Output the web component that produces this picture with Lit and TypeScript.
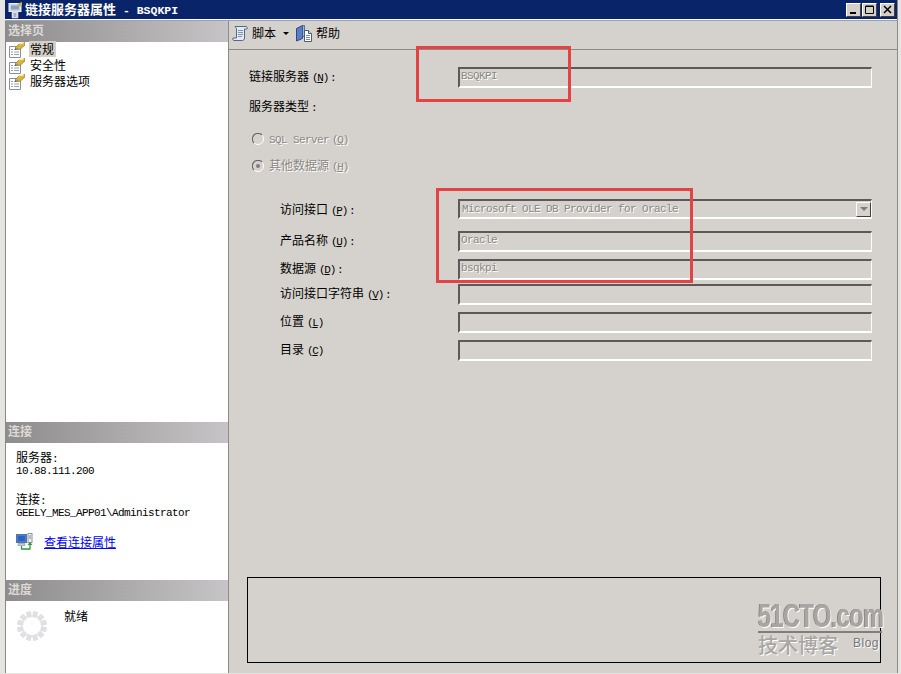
import { LitElement, html, css, svg } from "lit";
import { customElement } from "lit/decorators.js";

const pageIcon = html`<svg class="ico" viewBox="0 0 16 16" width="16" height="16">
  <path d="M.5 4.500h11v11H.5z" fill="#fff" stroke="#8a8f9a"/>
  <path d="M2 7.500h2M5 7.500h5M2 10h2M5 10h5M2 12.500h2M5 12.500h5" stroke="#8f9fb5"/>
  <path d="M6 6l4-4 6-1.500V3l-5 4.500z" fill="#d8b43c" stroke="#8a7420" stroke-width=".6"/>
  <path d="M10 2l5-1" stroke="#fff3b0"/>
  <path d="M6 6l2 1-2 1z" fill="#50606c"/>
</svg>`;

const scrollIcon = html`<svg class="ico" viewBox="0 0 16 17" width="16" height="17">
  <path d="M3 1.500H14a1.500 1.500 0 0 1 1 2.500H12.500V13c0 1.500-1 2.500-2 2.500H2c-1 0-1.500-1-1-2.500H4.500V4C4.500 3 3.500 2.500 3 1.500z" fill="#e4eaf2" stroke="#56688a"/>
  <path d="M6 5.500h5M6 7.500h5M6 9.500h5M6 11.500h4" stroke="#7f93ae"/>
</svg>`;

const helpIcon = html`<svg class="ico" viewBox="0 0 16 17" width="16" height="17">
  <path d="M.5 3.500l6-3v13l-6 2.500z" fill="#5a7fc0" stroke="#2e4a80"/>
  <path d="M6.500.500h2v11h-2z" fill="#9db8e0" stroke="#2e4a80" stroke-width=".7"/>
  <path d="M8.500 5.500h4l3 3v8h-7z" fill="#fff" stroke="#4a5a78"/>
  <path d="M12.500 5.500v3h3" fill="#d8e0ee" stroke="#4a5a78"/>
  <path d="M10 10.500h4M10 12.500h4M10 14.500h4" stroke="#7a8aa8"/>
</svg>`;

const connIcon = html`<svg class="ico" viewBox="0 0 17 17" width="17" height="17">
  <rect x=".5" y="1.500" width="10" height="8" fill="#3f7fe0" stroke="#5f6f8c"/>
  <rect x="2" y="3" width="7" height="5" fill="#2a62c8"/>
  <path d="M2 10.500h7v2H2z" fill="#c0c8d4" stroke="#8090a4" stroke-width=".6"/>
  <rect x="12" y=".5" width="4" height="9" fill="#eef0f4" stroke="#8a94a4"/>
  <path d="M13 3h2M13 5h2" stroke="#7a8494"/>
  <path d="M5.500 13v3h8.500v-5" fill="none" stroke="#2f9a3a" stroke-width="1.300"/>
  <path d="M11.500 12l2.500-3 2.500 3z" fill="#2f9a3a"/>
</svg>`;

const titleIcon = html`<svg class="ico" viewBox="0 0 16 18" width="16" height="18">
  <rect x="1" y="2.500" width="12" height="8" fill="#c8d2e0" stroke="#eef1f6"/>
  <rect x="3" y="4.500" width="8" height="4" fill="#8aa0bc"/>
  <path d="M4 11h6v6H4z" fill="#eef1f6" stroke="#b8c2d0" stroke-width=".7"/>
  <path d="M5.500 13h3M5.500 15h3" stroke="#5c6f8c"/>
  <path d="M9 3l5-2v3l-3 2z" fill="#c8b060"/>
</svg>`;

const spinnerBlocks = Array.from({ length: 12 }, (_, i) => {
  const angle = i * 30 + 15;
  return svg`<rect x="12.500" y="0" width="5" height="6" fill="#e0e0e4" transform="rotate(${angle} 15 15)"/>`;
});

const spinner = html`<svg class="spinner" viewBox="0 0 30 30" width="30" height="30">${spinnerBlocks}</svg>`;

const M = (ch: string) => html`<span class="mn">(<u>${ch}</u>)</span>`;

const SUB_ROWS = [
  { label: "访问接口", key: "P", colon: ":", value: "Microsoft OLE DB Provider for Oracle", h: 20, gap: 0, combo: true },
  { label: "产品名称", key: "U", colon: ":", value: "Oracle", h: 21, gap: 12, combo: false },
  { label: "数据源", key: "D", colon: ":", value: "bsqkpi", h: 21, gap: 7, combo: false },
  { label: "访问接口字符串", key: "V", colon: ":", value: "", h: 21, gap: 4, combo: false },
  { label: "位置", key: "L", colon: "", value: "", h: 21, gap: 7, combo: false },
  { label: "目录", key: "C", colon: "", value: "", h: 21, gap: 7, combo: false },
];

@customElement("app-root")
export class AppRoot extends LitElement {
  static styles = css`
    :host {
      display: block;
      width: 901px;
      height: 674px;
      position: relative;
      overflow: hidden;
      background: #e6e4e0;
      font-family: "Noto Sans CJK SC", "Liberation Sans", sans-serif;
      font-size: 12px;
      color: #000;
    }
    .ico { display: block; flex: none; }
    .window {
      display: flex;
      flex-direction: column;
      width: 893px;
      height: 673px;
      margin-left: 5px;
      border-right: 1px solid #8c8a86;
      box-sizing: border-box;
    }
    .titlebar {
      flex: none;
      height: 19px;
      background: #0a246a;
      display: flex;
      align-items: center;
      color: #fff;
      font-weight: 700;
      padding-left: 3px;
      gap: 1px;
      box-sizing: border-box;
    }
    .title-text { font-size: 13px; line-height: 19px; white-space: pre; flex: 1; }
    .title-latin { font-family: "Liberation Mono", monospace; font-size: 11.500px; }
    .winbtns { display: flex; margin-right: 2px; }
    .winbtn {
      width: 15px;
      height: 14px;
      box-sizing: border-box;
      background: #d4d0c8;
      border: 1px solid;
      border-color: #fff #404040 #404040 #fff;
      display: flex;
      align-items: center;
      justify-content: center;
      margin-left: 1px;
    }
    .winbtn.close { margin-left: 3px; }
    .winbtn svg { display: block; }
    .topline { flex: none; height: 2px; background: linear-gradient(#fff 50%, #9aa0b8 50%); }
    .body { flex: 1; display: flex; min-height: 0; }
    .left {
      flex: none;
      width: 224px;
      box-sizing: border-box;
      border-left: 1px solid #8c8a86;
      border-right: 1px solid #8c8a86;
      background: #fff;
      display: flex;
      flex-direction: column;
    }
    .hdr {
      flex: none;
      height: 21px;
      box-sizing: border-box;
      padding-left: 2px;
      line-height: 17px;
      font-weight: 700;
      color: #dcdad6;
      background: linear-gradient(90deg, #8e8c8c, #c6c4c6);
    }
    .list { height: 380px; flex: none; }
    .item { display: flex; align-items: center; height: 16px; padding-left: 3px; gap: 4px; white-space: nowrap; line-height: 14px; }
    .item span { padding: 0 1px; margin-top: -2px; }
    .item.sel span { background: #d4d0c8; padding: 1px 2px 1px 1px; }
    .conn { height: 137px; flex: none; padding: 7px 0 0 10px; box-sizing: border-box; }
    .conn .ln { height: 13px; line-height: 13px; white-space: pre; }
    .conn .ln.mono { line-height: 17px; }
    .mono { font-family: "Liberation Mono", monospace; font-size: 11px; letter-spacing: -.6px; white-space: pre; }
    .conn .gapped { margin-top: 16px; }
    .linkrow { display: flex; align-items: center; gap: 11px; margin-top: 15px; height: 17px; }
    .link { color: #0000ff; text-decoration: underline; line-height: 14px; }
    .prog { flex: 1; display: flex; padding: 10px 0 0 11px; gap: 17px; }
    .spinner { display: block; }
    .prog span { line-height: 10px; }
    .right {
      flex: 1;
      background: #d5d2cd;
      display: flex;
      flex-direction: column;
      min-width: 0;
    }
    .toolbar {
      flex: none;
      height: 24px;
      border-bottom: 1px solid #8c8a86;
      display: flex;
      align-items: center;
      padding: 0 0 4px 3px;
      white-space: nowrap;
      line-height: 16px;
    }
    .toolbar .lb { margin-left: 4px; }
    .caret { width: 0; height: 0; border: 3px solid transparent; border-top: 3px solid #000; border-bottom: 0; margin: 1px 7px 0 7px; }
    .form { flex: 1; display: flex; flex-direction: column; padding: 17px 0 0 20px; min-height: 0; }
    .row { display: flex; align-items: center; white-space: nowrap; }
    .lab { line-height: 16px; }
    .mn { font-family: "Liberation Mono", monospace; font-size: 11px; letter-spacing: -1.300px; margin-left: 3px; }
    .colon { font-family: "Liberation Mono", monospace; font-size: 11px; margin-left: 2px; }
    .name-lab { width: 209px; flex: none; margin-top: -1px; }
    .sub { padding-left: 31px; }
    .sub-lab { width: 178px; flex: none; margin-top: -2px; }
    .sub.combo-row .sub-lab { margin-top: 1px; }
    .input {
      box-sizing: border-box;
      width: 414px;
      flex: none;
      border: 2px solid;
      border-color: #5c5a58 #d5d2cd #fff #5c5a58;
      border-right: 1px solid #fff;
      border-bottom: 2px solid #fff;
      font-family: "Liberation Mono", monospace;
      font-size: 11px;
      letter-spacing: -.6px;
      color: #8a8884;
      text-shadow: 1px 1px 0 #fff;
      padding-left: 1px;
      display: flex;
      align-items: center;
      white-space: pre;
      line-height: 15px;
    }
    .input .dim { flex: 1; margin-top: -2px; }
    .input.combo .dim { padding-left: 1px; margin-top: 0; }
    .dropbtn {
      width: 15px;
      height: 15px;
      box-sizing: border-box;
      background: #d5d2cd;
      border: 1px solid;
      border-color: #fff #404040 #404040 #fff;
      display: flex;
      align-items: center;
      justify-content: center;
    }
    .dropbtn i { width: 0; height: 0; border: 4px solid transparent; border-top: 4px solid #807e7c; border-bottom: 0; }
    .type-lab { margin-top: 10px; height: 16px; }
    .radio-row { display: flex; align-items: center; height: 16px; padding-left: 3px; gap: 5px; color: #8a8884; text-shadow: 1px 1px 0 #fff; white-space: nowrap; line-height: 14px; }
    .radio-row svg { display: block; }
    .r1 { margin-top: 17px; }
    .r2 { margin-top: 11px; margin-bottom: 25px; }
    .radio-latin { font-family: "Liberation Mono", monospace; font-size: 11px; letter-spacing: -.6px; }
    .msgbox {
      flex: none;
      box-sizing: border-box;
      width: 634px;
      height: 86px;
      margin: auto 0 10px -2px;
      border: 1px solid #000;
    }
    .rect {
      position: absolute;
      box-sizing: border-box;
      border: 3px solid #e54343;
      pointer-events: none;
    }
    .rect.a { left: 416px; top: 46px; width: 155px; height: 56px; }
    .rect.b { left: 436px; top: 188px; width: 257px; height: 95px; }
    .wm { position: absolute; left: 758px; top: 600px; width: 124px; height: 58px; color: #a8a6a4; pointer-events: none; }
    .wm-big {
      font-family: "Liberation Sans", sans-serif;
      font-weight: 700;
      font-size: 34px;
      line-height: 30px;
      letter-spacing: -1px;
      transform: scaleX(.7);
      transform-origin: left;
      text-shadow: 1px 1px 0 #fff, -1px 0 0 #7e7c7a;
      white-space: nowrap;
    }
    .wm-line { height: 2px; background: #807e7c; margin-top: 1px; }
    .wm-bot { display: flex; align-items: flex-start; margin-top: 1px; }
    .wm-cn { font-size: 20px; line-height: 22px; text-shadow: 1px 1px 0 #fff; font-weight: 500; }
    .wm-blog { font-family: "Liberation Sans", sans-serif; font-size: 12px; line-height: 14px; margin: 2px 0 0 15px; letter-spacing: .5px; color: #777; text-shadow: 1px 1px 0 #fff; }
  `;

  private radio(checked: boolean) {
    return html`<svg viewBox="0 0 12 12" width="12" height="12">
      <circle cx="6" cy="6" r="5.500" fill="#d5d2cd" stroke="#fff"/>
      <path d="M2 10A5.500 5.500 0 0 1 10 2" fill="none" stroke="#6a6866" stroke-width="1.200"/>
      ${checked ? svg`<circle cx="6" cy="6" r="2" fill="#807e7c"/>` : ""}
    </svg>`;
  }

  render() {
    return html`
      <div class="window">
        <div class="titlebar">
          ${titleIcon}
          <div class="title-text">链接服务器属性<span class="title-latin"> - BSQKPI</span></div>
          <div class="winbtns">
            <div class="winbtn"><svg width="9" height="9" viewBox="0 0 9 9"><path d="M1 7h6v2H1z" fill="#000"/></svg></div>
            <div class="winbtn"><svg width="9" height="9" viewBox="0 0 9 9"><path d="M.5 1.500h8v7h-8zM.5 1h8" fill="none" stroke="#000"/></svg></div>
            <div class="winbtn close"><svg width="9" height="9" viewBox="0 0 9 9"><path d="M1 1l7 7M8 1L1 8" stroke="#000" stroke-width="1.500"/></svg></div>
          </div>
        </div>
        <div class="topline"></div>
        <div class="body">
          <div class="left">
            <div class="hdr">选择页</div>
            <div class="list">
              <div class="item sel">${pageIcon}<span>常规</span></div>
              <div class="item">${pageIcon}<span>安全性</span></div>
              <div class="item">${pageIcon}<span>服务器选项</span></div>
            </div>
            <div class="hdr">连接</div>
            <div class="conn">
              <div class="ln">服务器<span class="mono">:</span></div>
              <div class="ln mono">10.88.111.200</div>
              <div class="ln gapped">连接<span class="mono">:</span></div>
              <div class="ln mono">GEELY_MES_APP01\\Administrator</div>
              <div class="linkrow">${connIcon}<span class="link">查看连接属性</span></div>
            </div>
            <div class="hdr">进度</div>
            <div class="prog">
              ${spinner}
              <span>就绪</span>
            </div>
          </div>
          <div class="right">
            <div class="toolbar">
              ${scrollIcon}<span class="lb">脚本</span><span class="caret"></span>${helpIcon}<span class="lb">帮助</span>
            </div>
            <div class="form">
              <div class="row">
                <div class="lab name-lab">链接服务器${M("N")}<span class="colon">:</span></div>
                <div class="input" style="height:21px"><span class="dim">BSQKPI</span></div>
              </div>
              <div class="lab type-lab">服务器类型<span class="colon">:</span></div>
              <div class="radio-row r1">${this.radio(false)}<span><span class="radio-latin">SQL Server</span>${M("Q")}</span></div>
              <div class="radio-row r2">${this.radio(true)}<span>其他数据源${M("H")}</span></div>
              ${SUB_ROWS.map(
                (r) => html`
                  <div class="row sub ${r.combo ? "combo-row" : ""}" style="margin-top:${r.gap}px">
                    <div class="lab sub-lab">${r.label}${M(r.key)}<span class="colon">${r.colon}</span></div>
                    <div class="input ${r.combo ? "combo" : ""}" style="height:${r.h}px">
                      <span class="dim">${r.value}</span>
                      ${r.combo ? html`<span class="dropbtn"><i></i></span>` : ""}
                    </div>
                  </div>
                `
              )}
              <div class="msgbox"></div>
            </div>
          </div>
        </div>
      </div>
      <div class="rect a"></div>
      <div class="rect b"></div>
      <div class="wm">
        <div class="wm-big">51CTO.com</div>
        <div class="wm-line"></div>
        <div class="wm-bot"><span class="wm-cn">技术博客</span><span class="wm-blog">Blog</span></div>
      </div>
    `;
  }
}
